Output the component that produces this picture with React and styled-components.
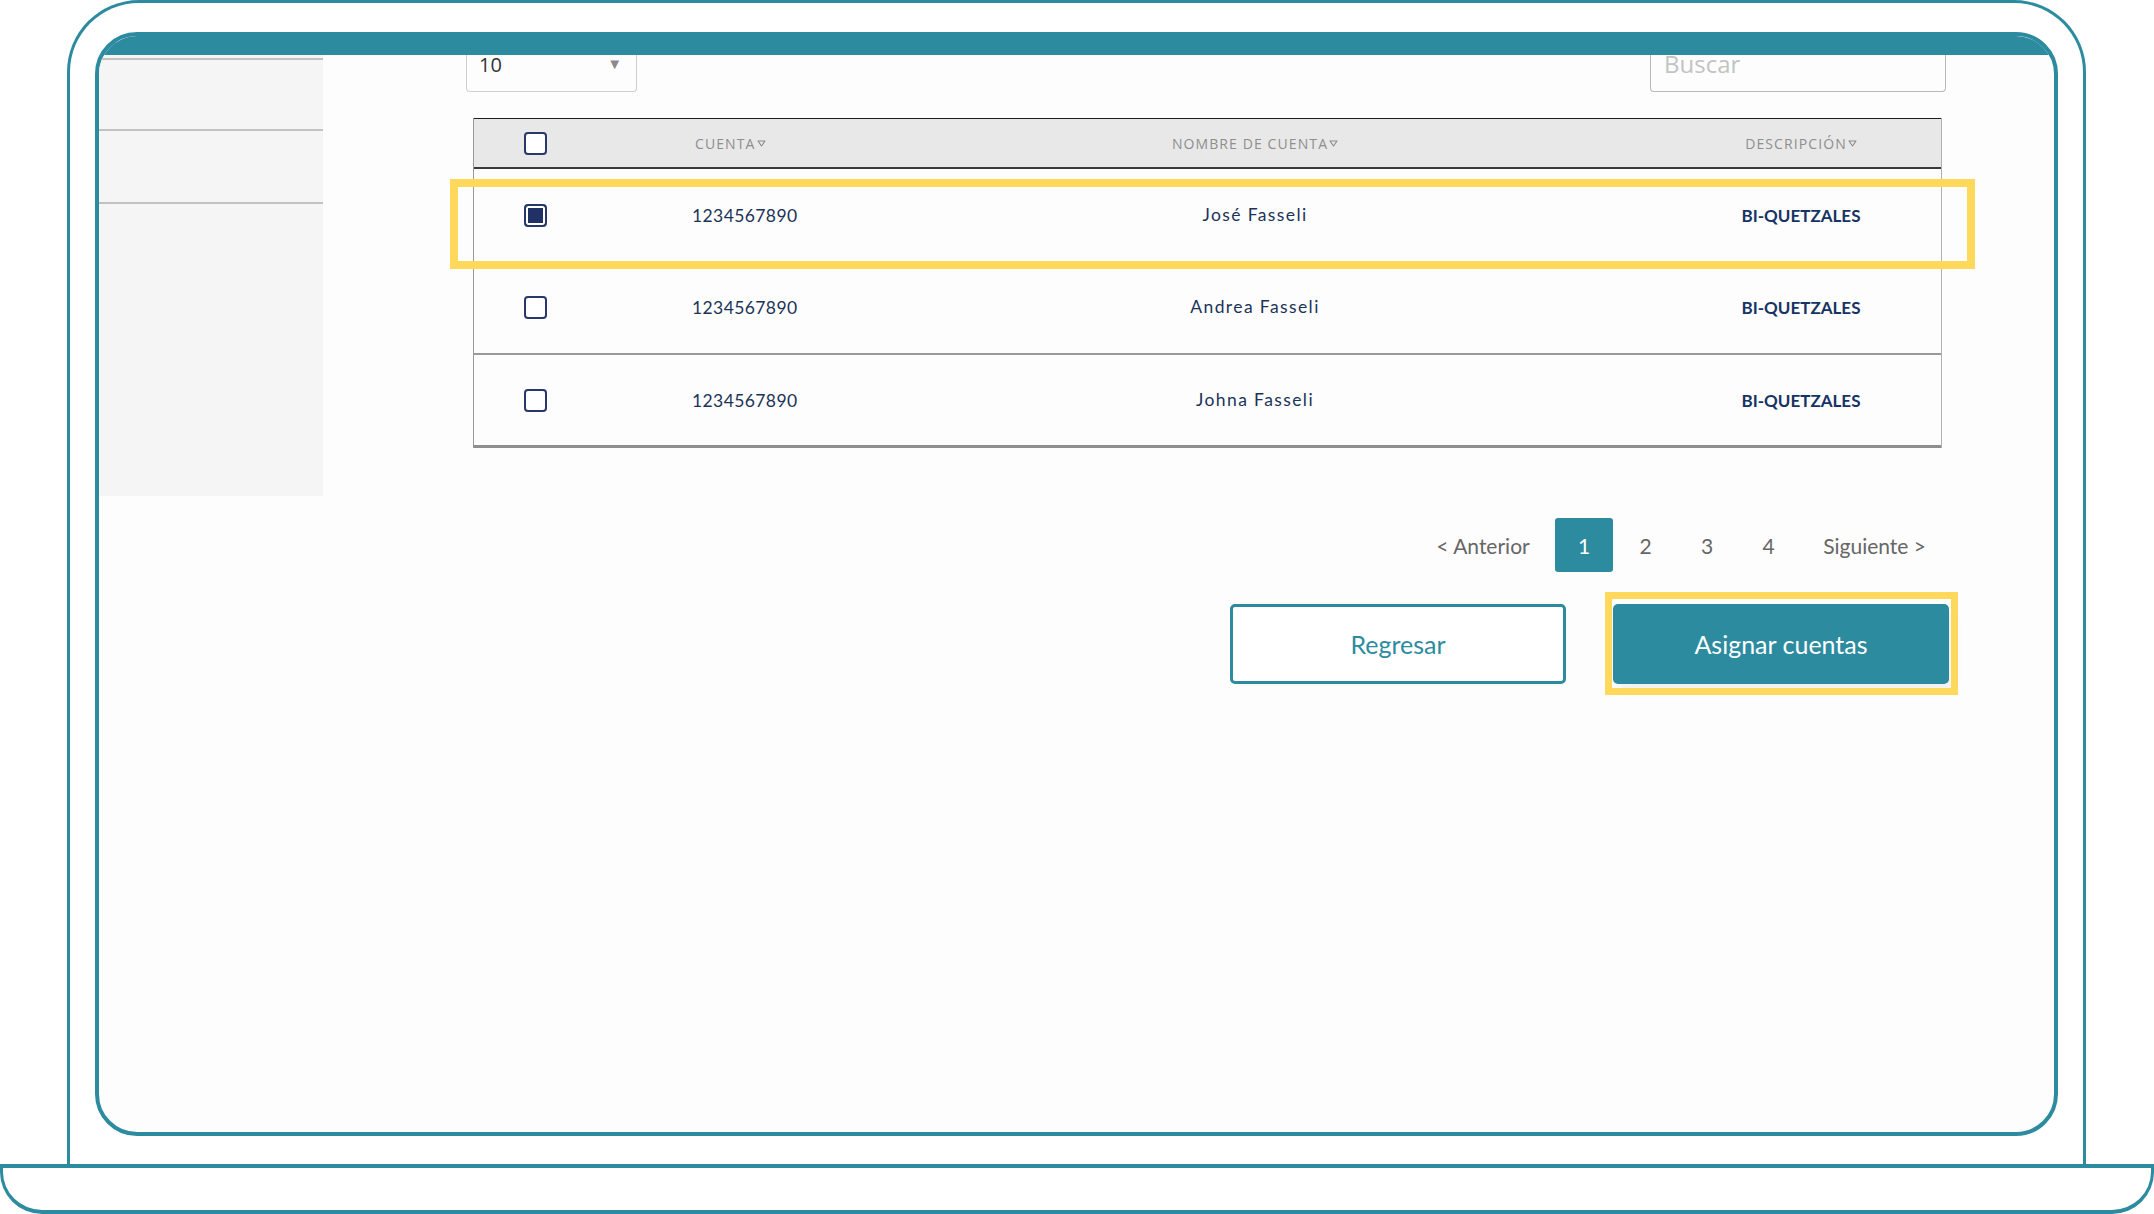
import styled, { createGlobalStyle } from "styled-components"

const TEAL = "#2d8b9f"
const NAVY = "#1b3358"

const rows = [
    { id: 1, account: "1234567890", name: "José Fasseli", desc: "BI-QUETZALES", checked: true, border: "1px solid #d8d8d8" },
    { id: 2, account: "1234567890", name: "Andrea Fasseli", desc: "BI-QUETZALES", checked: false, border: "2px solid #9a9a9a" },
    { id: 3, account: "1234567890", name: "Johna Fasseli", desc: "BI-QUETZALES", checked: false, border: "3px solid #8f8f8f" },
]

const pages = ["1", "2", "3", "4"]

function SortIcon() {
    return (
        <svg width="9" height="7" viewBox="0 0 9 7">
            <path d="M1 1 L8 1 L4.5 6 Z" fill="none" stroke="#8a8a8a" strokeWidth="1.1" strokeLinejoin="round" />
        </svg>
    )
}

export default function App() {
    return (
        <>
            <GlobalStyle />
            <Page>
                <Lid>
                    <Screen>
                        <TopBar />
                        <Body>
                            <Sidebar>
                                <SideItem />
                                <SideItem $tall />
                                <SideItem $grow />
                            </Sidebar>
                            <Main>
                                <TopRow>
                                    <Select>
                                        <span>10</span>
                                        <Caret>▼</Caret>
                                    </Select>
                                    <Search>Buscar</Search>
                                </TopRow>

                                <Table>
                                    <HeaderRow>
                                        <Cell><Checkbox /></Cell>
                                        <HeadLabel>CUENTA<SortIcon /></HeadLabel>
                                        <HeadLabel $center>NOMBRE DE CUENTA<SortIcon /></HeadLabel>
                                        <HeadLabel $center $desc>DESCRIPCIÓN<SortIcon /></HeadLabel>
                                    </HeaderRow>
                                    {rows.map(row => (
                                        <Row key={row.id} $border={row.border}>
                                            <Cell><Checkbox $checked={row.checked} /></Cell>
                                            <Account>{row.account}</Account>
                                            <Name>{row.name}</Name>
                                            <Desc>{row.desc}</Desc>
                                            {row.checked && <RowHighlight />}
                                        </Row>
                                    ))}
                                </Table>

                                <Pagination>
                                    <PageLink>&lt; Anterior</PageLink>
                                    {pages.map(p => (
                                        <PageNumber key={p} $active={p === "1"}>{p}</PageNumber>
                                    ))}
                                    <PageLink>Siguiente &gt;</PageLink>
                                </Pagination>

                                <Actions>
                                    <OutlineButton>Regresar</OutlineButton>
                                    <PrimaryWrap>
                                        <PrimaryButton>Asignar cuentas</PrimaryButton>
                                        <ButtonHighlight />
                                    </PrimaryWrap>
                                </Actions>
                            </Main>
                        </Body>
                    </Screen>
                </Lid>
                <Base />
            </Page>
        </>
    )
}

const GlobalStyle = createGlobalStyle`
    * {
        box-sizing: border-box;
    }

    body {
        margin: 0;
        background: #ffffff;
        font-family: 'Lato', 'Liberation Sans', sans-serif;
        overflow: hidden;
    }
`

const Page = styled.div`
    width: 2154px;
    height: 1214px;
    display: flex;
    flex-direction: column;
`

const Lid = styled.div`
    width: 2019px;
    height: 1164px;
    margin-left: 67px;
    padding: 29px 25px 28px 25px;
    border: 3px solid ${TEAL};
    border-bottom: none;
    border-radius: 72px 72px 0 0;
`

const Screen = styled.div`
    width: 100%;
    height: 100%;
    border: 4px solid ${TEAL};
    border-radius: 42px;
    background: #fdfdfd;
    overflow: hidden;
    display: flex;
    flex-direction: column;
`

const TopBar = styled.div`
    height: 19px;
    flex-shrink: 0;
    background: ${TEAL};
`

const Body = styled.div`
    flex: 1;
    display: flex;
    align-items: flex-start;
`

const Sidebar = styled.div`
    width: 224px;
    height: 441px;
    flex-shrink: 0;
    padding-top: 3px;
    background: #f5f5f5;
    display: flex;
    flex-direction: column;
`

const SideItem = styled.div`
    height: ${props => props.$tall ? '73px' : '71px'};
    flex: ${props => props.$grow ? 1 : 'none'};
    border-top: 2px solid #c2c2c2;
`

const Main = styled.div`
    flex: 1;
    padding: 0 108px 0 143px;
    display: flex;
    flex-direction: column;
`

const TopRow = styled.div`
    display: flex;
    justify-content: space-between;
    align-items: flex-start;
`

const Select = styled.div`
    width: 171px;
    height: 37px;
    padding: 0 12px;
    border: 1px solid #cfcfcf;
    border-top: none;
    border-radius: 0 0 4px 4px;
    display: flex;
    justify-content: space-between;
    align-items: flex-start;
    font-family: 'Open Sans', 'Liberation Sans', sans-serif;
    font-size: 20px;
    line-height: 20px;
    color: #333;
`

const Caret = styled.span`
    font-size: 15px;
    line-height: 16px;
    color: #8a8a8a;
    margin-right: 2px;
`

const Search = styled.div`
    width: 296px;
    height: 37px;
    padding: 0 13px;
    border: 1px solid #b8b8b8;
    border-top: none;
    border-radius: 0 0 4px 4px;
    font-family: 'Open Sans', 'Liberation Sans', sans-serif;
    font-size: 24px;
    line-height: 18px;
    color: #c3c3c3;
`

const Table = styled.div`
    width: 1469px;
    margin: 26px 0 0 7px;
    border-left: 1px solid #9a9a9a;
    border-right: 1px solid #b0b0b0;
`

const gridColumns = `
    display: grid;
    grid-template-columns: 128px 420px 466px 1fr;
    align-items: center;
`

const HeaderRow = styled.div`
    ${gridColumns}
    height: 51px;
    background: #e8e8e8;
    border-top: 1.5px solid #1e1e1e;
    border-bottom: 2px solid #3a3a3a;
`

const Cell = styled.div`
    display: flex;
    justify-content: center;
    align-items: center;
    padding-right: 5px;
`

const Checkbox = styled.div`
    width: 23px;
    height: 23px;
    border: 2px solid #27386a;
    border-radius: 4px;
    background: ${props => props.$checked ? '#1f3263' : '#ffffff'};
    box-shadow: ${props => props.$checked ? 'inset 0 0 0 2px #ffffff' : 'none'};
`

const HeadLabel = styled.div`
    display: flex;
    align-items: center;
    justify-content: ${props => props.$center ? 'center' : 'flex-start'};
    gap: 1px;
    padding-left: ${props => props.$desc ? '173px' : props.$center ? '0' : '93px'};
    font-family: 'Open Sans', 'Liberation Sans', sans-serif;
    font-size: 14px;
    font-weight: 400;
    letter-spacing: 1.1px;
    color: #8e8e8e;
`

const Row = styled.div`
    ${gridColumns}
    position: relative;
    height: 93px;
    border-bottom: ${props => props.$border};
`

const Account = styled.div`
    padding-left: 90px;
    font-size: 17.5px;
    letter-spacing: 0.4px;
    color: ${NAVY};
`

const Name = styled.div`
    text-align: center;
    font-size: 17.5px;
    letter-spacing: 1.4px;
    color: ${NAVY};
    margin-top: -2px;
`

const Desc = styled.div`
    padding-left: 173px;
    text-align: center;
    font-size: 17px;
    font-weight: 700;
    color: #163463;
`

const RowHighlight = styled.div`
    position: absolute;
    top: 10px;
    bottom: -8px;
    left: -24px;
    right: -34px;
    border: 8px solid #ffd85c;
    pointer-events: none;
`

const Pagination = styled.div`
    display: flex;
    justify-content: flex-end;
    align-items: center;
    gap: 3.5px;
    margin-top: 70px;
    margin-right: -2px;
`

const PageLink = styled.div`
    padding: 0 22px;
    font-size: 21px;
    color: #666666;
`

const PageNumber = styled.div`
    width: 58px;
    height: 54px;
    border-radius: 3px;
    display: flex;
    justify-content: center;
    align-items: center;
    font-size: 21px;
    color: ${props => props.$active ? '#ffffff' : '#666666'};
    background: ${props => props.$active ? TEAL : 'transparent'};
`

const Actions = styled.div`
    display: flex;
    justify-content: flex-end;
    gap: 47px;
    margin-top: 32px;
    margin-right: -3px;
`

const buttonBase = `
    width: 336px;
    height: 80px;
    border-radius: 5px;
    display: flex;
    justify-content: center;
    align-items: center;
    font-family: 'Lato', 'Liberation Sans', sans-serif;
    font-size: 25px;
`

const OutlineButton = styled.div`
    ${buttonBase}
    border: 3px solid ${TEAL};
    background: #ffffff;
    color: ${TEAL};
`

const PrimaryWrap = styled.div`
    position: relative;
`

const PrimaryButton = styled.div`
    ${buttonBase}
    background: ${TEAL};
    color: #ffffff;
    box-shadow: 6px 8px 10px rgba(0, 0, 0, 0.05);
`

const ButtonHighlight = styled.div`
    position: absolute;
    top: -12px;
    bottom: -11px;
    left: -8px;
    right: -9px;
    border: 7px solid #ffd85c;
    pointer-events: none;
`

const Base = styled.div`
    width: 2154px;
    height: 50px;
    border: 3px solid ${TEAL};
    border-top-width: 4px;
    border-bottom-width: 4px;
    border-radius: 0 0 42px 42px;
`
